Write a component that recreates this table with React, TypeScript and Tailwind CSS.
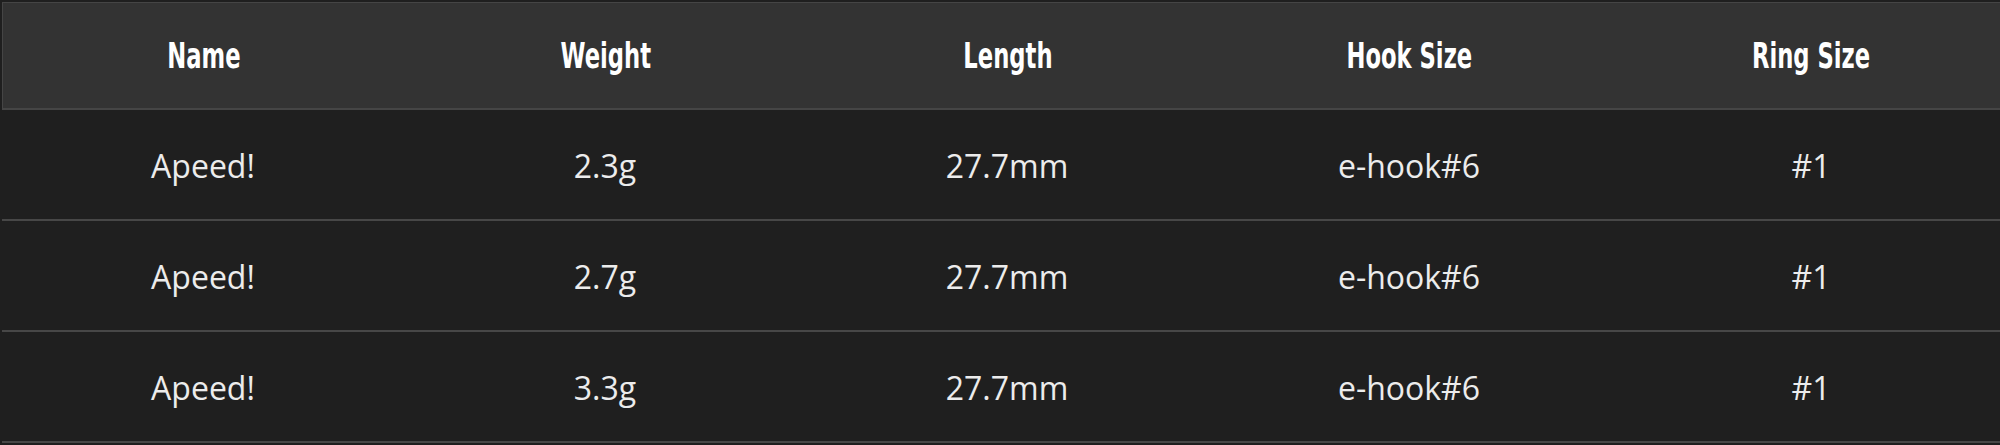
const HEAD = ["Name", "Weight", "Length", "Hook Size", "Ring Size"];

const ROWS = [
  ["Apeed!", "2.3g", "27.7mm", "e-hook#6", "#1"],
  ["Apeed!", "2.7g", "27.7mm", "e-hook#6", "#1"],
  ["Apeed!", "3.3g", "27.7mm", "e-hook#6", "#1"],
];

export default function App() {
  return (
    <div className="h-[445px] w-full overflow-hidden bg-[#1f1f1f] pt-[2px] pl-[2px]">
      <div className="w-[2010px]">
        <div className="grid h-[108px] grid-cols-5 items-center border-t border-l border-b-2 border-[#454545] bg-[#333333] pt-[2px]">
          {HEAD.map((h) => (
            <div key={h} className="text-center">
              <span
                className="inline-block scale-x-[0.72] text-[35px] font-bold leading-none text-white"
                style={{ fontFamily: '"Liberation Sans Narrow", "DejaVu Sans Condensed", "Arial Narrow", sans-serif' }}
              >
                {h}
              </span>
            </div>
          ))}
        </div>
        {ROWS.map((row, i) => (
          <div
            key={i}
            className="grid h-[111px] grid-cols-5 items-center border-b-2 border-[#474747] pt-[3px] font-['Open_Sans',sans-serif] text-[32px] leading-none text-[#ececec]"
          >
            {row.map((c, j) => (
              <div key={j} className="text-center">
                {c}
              </div>
            ))}
          </div>
        ))}
      </div>
    </div>
  );
}
